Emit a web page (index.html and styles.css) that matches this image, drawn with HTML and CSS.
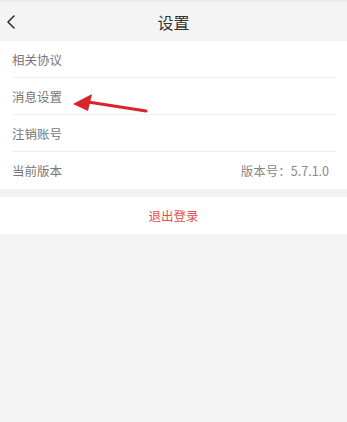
FILE: index.html
```html
<!DOCTYPE html>
<html lang="zh">
<head>
<meta charset="utf-8">
<title>设置</title>
<link rel="stylesheet" href="styles.css">
</head>
<body>
<div class="page">
  <header class="topbar">
    <span class="back">
      <svg width="12" height="16" viewBox="0 0 12 16"><path d="M9 2 L3 8 L9 14" fill="none" stroke="#333" stroke-width="1.6" stroke-linecap="round" stroke-linejoin="round"/></svg>
    </span>
    <h1 class="title">设置</h1>
  </header>
  <ul class="list">
    <li class="row"><span class="label">相关协议</span></li>
    <li class="row"><span class="label">消息设置</span></li>
    <li class="row"><span class="label">注销账号</span></li>
    <li class="row"><span class="label">当前版本</span><span class="value">版本号：5.7.1.0</span></li>
  </ul>
  <div class="logout">退出登录</div>
  <svg class="arrow" width="80" height="24" viewBox="0 0 80 24">
    <line x1="74" y1="19" x2="16" y2="10" stroke="#d9232b" stroke-width="3" stroke-linecap="round"/>
    <polygon points="1,12 20,2 16,19" fill="#d9232b"/>
  </svg>
</div>
</body>
</html>
```
FILE: styles.css
```css
* { box-sizing: border-box; }
html, body { margin: 0; padding: 0; }
body {
  background: #f3f3f3;
  font-family: "Noto Sans CJK SC", "Noto Sans", sans-serif;
  width: 347px;
  height: 422px;
  overflow: hidden;
}
.page { position: relative; height: 422px; }
.topbar {
  height: 41px;
  background: #f4f4f4;
  border-top: 2px solid #ececec;
  display: flex;
  align-items: center;
  justify-content: center;
  position: relative;
}
.back {
  position: absolute;
  left: 5px;
  top: 12px;
  display: flex;
}
.title {
  margin: 0;
  font-size: 16px;
  font-weight: normal;
  color: #333;
  letter-spacing: 0;
  padding-left: 0;
}
.list {
  list-style: none;
  margin: 0;
  padding: 0 11px 0 12px;
  background: #fff;
}
.row {
  height: 37px;
  display: flex;
  align-items: center;
  justify-content: space-between;
  border-bottom: 1px solid #f0f0f0;
  font-size: 12.5px;
  color: #777;
}
.row:last-child { border-bottom: none; }
.value { color: #888; padding-right: 7px; font-size: 12.5px; }
.logout {
  margin-top: 8px;
  height: 37px;
  background: #fff;
  display: flex;
  align-items: center;
  justify-content: center;
  color: #e0514f;
  font-size: 12.5px;
}
.arrow {
  position: absolute;
  left: 72px;
  top: 92px;
}
```
